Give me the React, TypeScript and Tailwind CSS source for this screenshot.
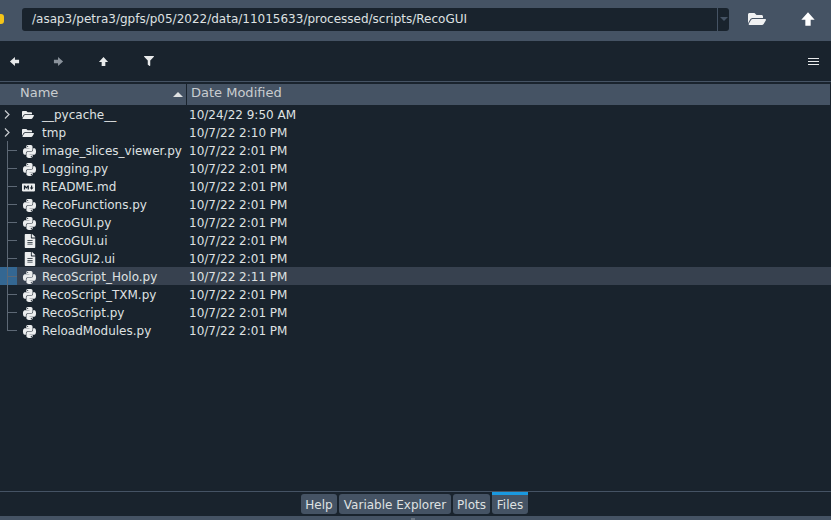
import { ReactNode } from "react";
import { FaPython, FaMarkdown, FaFileAlt, FaFolderOpen, FaFilter } from "react-icons/fa";

type Row = { name: string; date: string; kind: "folder" | "py" | "md" | "ui"; selected?: boolean };

const rows: Row[] = [
  { name: "__pycache__", date: "10/24/22 9:50 AM", kind: "folder" },
  { name: "tmp", date: "10/7/22 2:10 PM", kind: "folder" },
  { name: "image_slices_viewer.py", date: "10/7/22 2:01 PM", kind: "py" },
  { name: "Logging.py", date: "10/7/22 2:01 PM", kind: "py" },
  { name: "README.md", date: "10/7/22 2:01 PM", kind: "md" },
  { name: "RecoFunctions.py", date: "10/7/22 2:01 PM", kind: "py" },
  { name: "RecoGUI.py", date: "10/7/22 2:01 PM", kind: "py" },
  { name: "RecoGUI.ui", date: "10/7/22 2:01 PM", kind: "ui" },
  { name: "RecoGUI2.ui", date: "10/7/22 2:01 PM", kind: "ui" },
  { name: "RecoScript_Holo.py", date: "10/7/22 2:11 PM", kind: "py", selected: true },
  { name: "RecoScript_TXM.py", date: "10/7/22 2:01 PM", kind: "py" },
  { name: "RecoScript.py", date: "10/7/22 2:01 PM", kind: "py" },
  { name: "ReloadModules.py", date: "10/7/22 2:01 PM", kind: "py" },
];

function BoldArrow({ rotate, size = 12, color = "#e8eaeb" }: { rotate: string; size?: number; color?: string }) {
  return (
    <svg width={size} height={size} viewBox="0 0 12 12" className={rotate}>
      <path d="M6 1 L11 6.5 L8 6.5 L8 11 L4 11 L4 6.5 L1 6.5 Z" fill={color} />
    </svg>
  );
}

function FileIcon({ kind }: { kind: Row["kind"] }) {
  if (kind === "py") return <FaPython className="text-[15px] text-[#eceeef]" />;
  if (kind === "md") return <FaMarkdown className="text-[13px] text-[#eceeef]" />;
  if (kind === "ui") return <FaFileAlt className="text-[14px] ml-px text-[#eceeef]" />;
  return <FaFolderOpen className="text-[12px] text-[#eceeef]" />;
}

function TreeGuide({ row, last }: { row: Row; last: boolean }) {
  if (row.kind === "folder") {
    return (
      <div className="w-[20px] h-full flex items-center pl-[4px] pt-[1px]">
        <svg width="6" height="9" viewBox="0 0 6 9">
          <path d="M1 0.5 L5 4.5 L1 8.5" fill="none" stroke="#c9cdd0" strokeWidth="1.2" />
        </svg>
      </div>
    );
  }
  return (
    <div className="w-[20px] h-full flex relative">
      {row.selected && <div className="absolute left-0 top-0 w-[17px] h-full bg-[#346792]" />}
      <div className={`relative ml-[7px] w-px bg-[#5d6875] ${last ? "h-[10px]" : "h-full"}`} />
      <div className="relative w-[9px] h-px bg-[#5d6875] mt-[9px]" />
    </div>
  );
}

function Tab({ children, active, width }: { children: ReactNode; active?: boolean; width: string }) {
  return (
    <div
      className={`${width} rounded-b-[3px] flex items-center justify-center text-[12px] text-[#dfe1e2] bg-[#455364] ${
        active ? "h-[22px] border-t-[3px] border-[#1a99e0]" : "h-[20px] mt-[2px] pt-px rounded-t-[3px]"
      }`}
    >
      {children}
    </div>
  );
}

export default function App() {
  return (
    <div className="w-[831px] h-[520px] overflow-hidden flex flex-col bg-[#19232d] text-[#dfe1e2] text-[12px] font-['DejaVu_Sans',sans-serif]">
      {/* path bar */}
      <div className="h-[41px] shrink-0 bg-[#455364] flex items-center relative">
        <div className="absolute left-[-6px] top-[14px] w-[10px] h-[10px] rounded-[3px] bg-[#f5c518]" />
        <div className="ml-[22px] w-[707px] h-[23px] rounded-[3px] bg-[#19232d] flex items-center mb-[3px]">
          <span className="flex-1 pl-[10px] text-[12px] text-[#dfe1e2] truncate">
            /asap3/petra3/gpfs/p05/2022/data/11015633/processed/scripts/RecoGUI
          </span>
          <div className="w-[12px] h-full border-l border-[#455364] flex items-center justify-center">
            <div className="w-0 h-0 border-x-[4px] border-x-transparent border-t-[4px] border-t-[#455364]" />
          </div>
        </div>
        <FaFolderOpen className="ml-[19px] mb-[3px] text-[18px] text-[#f0f1f2]" />
        <div className="ml-[34px] mb-[4px] flex">
          <BoldArrow rotate="" size={16} color="#ffffff" />
        </div>
      </div>

      {/* toolbar */}
      <div className="h-[40px] shrink-0 flex items-center relative">
        <div className="ml-[9px] flex items-center">
          <BoldArrow rotate="-rotate-90" size={11} />
        </div>
        <div className="ml-[33px] flex items-center">
          <BoldArrow rotate="rotate-90" size={11} color="#8a929b" />
        </div>
        <div className="ml-[34px] flex items-center">
          <BoldArrow rotate="" size={11} />
        </div>
        <FaFilter className="ml-[35px] text-[10px] text-[#e8eaeb]" />
        <div className="ml-auto mr-[12px] flex flex-col gap-[2px]">
          <div className="w-[11px] h-px bg-[#e8eaeb]" />
          <div className="w-[11px] h-px bg-[#e8eaeb]" />
          <div className="w-[11px] h-px bg-[#e8eaeb]" />
        </div>
      </div>

      {/* table header */}
      <div className="h-px shrink-0 bg-[#455364]" />
      <div className="h-[2px] shrink-0" />
      <div className="h-[21px] shrink-0 bg-[#455364] mr-[1px] flex items-center text-[13px] text-[#c9cdd0]">
        <div className="w-[187px] h-full pl-[20px] pr-[3px] pb-[4px] flex items-center justify-between border-r border-[#19232d]">
          <span>Name</span>
          <div className="w-0 h-0 mt-[4px] border-x-[5px] border-x-transparent border-b-[5px] border-b-[#dfe1e2]" />
        </div>
        <span className="pl-[4px] pb-[4px]">Date Modified</span>
      </div>

      {/* file tree */}
      <div className="flex-1">
        {rows.map((row, i) => (
          <div
            key={row.name}
            className={`h-[18px] flex items-center ${row.selected ? "bg-[#37414f]" : ""}`}
          >
            <TreeGuide row={row} last={i === rows.length - 1} />
            <div className="w-[22px] pt-[2px] flex items-center justify-start pl-[2px]">
              <FileIcon kind={row.kind} />
            </div>
            <span className="w-[147px] pt-[2px] whitespace-nowrap">{row.name}</span>
            <span className="pt-[2px] whitespace-nowrap">{row.date}</span>
          </div>
        ))}
      </div>

      {/* tabs */}
      <div className="h-px shrink-0 bg-[#455364]" />
      <div className="h-[24px] shrink-0 flex items-start pl-[301px] gap-[2px]">
        <Tab width="w-[36px]">Help</Tab>
        <Tab width="w-[112px]">Variable Explorer</Tab>
        <Tab width="w-[37px]">Plots</Tab>
        <Tab width="w-[36px]" active>Files</Tab>
      </div>
      <div className="h-[4px] shrink-0 bg-[#455364] flex items-end pl-[411px]">
        <div className="w-[4px] h-[2px] bg-[#6b7683]" />
      </div>
    </div>
  );
}
